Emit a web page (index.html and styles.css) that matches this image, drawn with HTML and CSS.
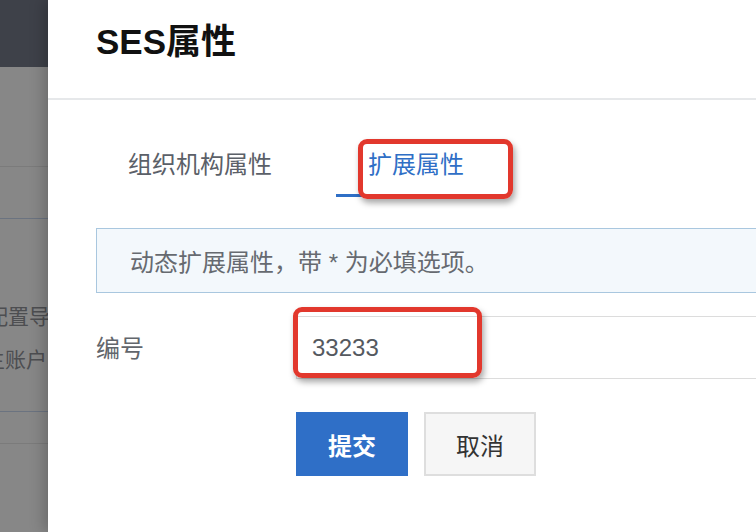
FILE: index.html
```html
<!DOCTYPE html>
<html lang="zh-CN">
<head>
<meta charset="utf-8">
<title>SES属性</title>
<link rel="stylesheet" href="styles.css">
</head>
<body>
<div class="backdrop">
  <div class="bg-header"></div>
  <div class="bg-sec bg-sec1"></div>
  <div class="bg-sec bg-sec2"></div>
  <div class="bg-sec bg-sec3">
    <div class="bg-line bg-line1">配置导入</div>
    <div class="bg-line bg-line2">主账户</div>
  </div>
  <div class="bg-sec bg-sec4"></div>
</div>
<div class="modal">
  <div class="modal-header">
    <h1 class="modal-title">SES属性</h1>
  </div>
  <div class="modal-body">
    <div class="tabs">
      <div class="tab">组织机构属性</div>
      <div class="tab tab-active">扩展属性</div>
    </div>
    <div class="info">动态扩展属性，带 * 为必填选项。</div>
    <div class="form-row">
      <label class="form-label">编号</label>
      <input class="form-input" type="text" value="33233">
    </div>
    <div class="actions">
      <button class="btn btn-primary">提交</button>
      <button class="btn btn-default">取消</button>
    </div>
  </div>
</div>
<div class="mark mark-tab"></div>
<div class="mark mark-input"></div>
</body>
</html>
```
FILE: styles.css
```css
html, body {
  margin: 0;
  padding: 0;
}
body {
  width: 756px;
  height: 532px;
  overflow: hidden;
  display: flex;
  position: relative;
  font-family: "Liberation Sans", "Noto Sans CJK SC", sans-serif;
  background: #ffffff;
}

/* dimmed page behind the drawer */
.backdrop {
  width: 48px;
  flex-shrink: 0;
  background: #878787;
  overflow: hidden;
}
.bg-header {
  height: 67px;
  background: #3e4149;
}
.bg-sec1 {
  height: 99px;
  border-bottom: 1px solid #7b7b7b;
}
.bg-sec2 {
  height: 51px;
  border-bottom: 1px solid #6b7380;
}
.bg-sec3 {
  height: 116px;
  padding-top: 76px;
  border-bottom: 1px solid #6b7380;
}
.bg-line {
  font-size: 21px;
  line-height: 43px;
  color: #4d4e51;
  white-space: nowrap;
}
.bg-line1 { margin-left: -13px; }
.bg-line2 { margin-left: -16px; }
.bg-sec4 {
  height: 31px;
  border-bottom: 1px solid #7b7b7b;
}

/* drawer */
.modal {
  flex: 1;
  background: #ffffff;
  position: relative;
  z-index: 1;
  box-shadow: -4px 0 14px rgba(0, 0, 0, 0.22);
}
.modal-header {
  height: 78px;
  padding: 20px 0 0 48px;
  border-bottom: 2px solid #e6e8ea;
}
.modal-title {
  margin: 0;
  font-size: 35px;
  line-height: 44px;
  font-weight: 600;
  color: #111111;
}
.modal-body {
  padding-left: 48px;
}

.tabs {
  display: flex;
  gap: 32px;
  margin-top: 49px;
}
.tab {
  font-size: 24px;
  line-height: 32px;
  padding: 0 32px 13px;
  border-bottom: 3px solid transparent;
  color: #5b6068;
}
.tab-active {
  color: #2f6fc6;
  border-bottom-color: #2f6fc6;
}

.info {
  margin-top: 31px;
  height: 63px;
  display: flex;
  align-items: center;
  padding-left: 33px;
  background: #f3f8fc;
  border: 1px solid #a9c7df;
  border-right: none;
  font-size: 24px;
  color: #666a70;
}

.form-row {
  display: flex;
  align-items: center;
  margin-top: 23px;
}
.form-label {
  width: 200px;
  flex-shrink: 0;
  font-size: 24px;
  color: #62666c;
  margin-top: -3px;
}
.form-input {
  flex: 1;
  min-width: 0;
  box-sizing: border-box;
  height: 63px;
  margin: 0;
  padding: 0 0 0 15px;
  border: 1px solid #dcdcdc;
  border-right: none;
  border-radius: 0;
  font-family: "Liberation Sans", "Noto Sans CJK SC", sans-serif;
  font-size: 24px;
  color: #55595f;
  background: #ffffff;
  outline: none;
}

.actions {
  display: flex;
  gap: 16px;
  margin-top: 33px;
  padding-left: 200px;
}
.btn {
  width: 112px;
  height: 64px;
  box-sizing: border-box;
  margin: 0;
  padding: 0;
  font-family: "Liberation Sans", "Noto Sans CJK SC", sans-serif;
  font-size: 24px;
  border-radius: 0;
}
.btn-primary {
  background: #2f6fc7;
  border: none;
  color: #ffffff;
  font-weight: 600;
}
.btn-default {
  background: #f6f6f6;
  border: 2px solid #dedede;
  color: #333333;
}

/* red annotation boxes drawn over the screenshot */
.mark {
  position: absolute;
  box-sizing: border-box;
  border: 5px solid #e2382d;
  border-radius: 9px;
  box-shadow: 2px 4px 6px rgba(0, 0, 0, 0.35);
  z-index: 2;
}
.mark-tab {
  left: 358px;
  top: 139px;
  width: 155px;
  height: 60px;
}
.mark-input {
  left: 293px;
  top: 307px;
  width: 189px;
  height: 71px;
}
```
